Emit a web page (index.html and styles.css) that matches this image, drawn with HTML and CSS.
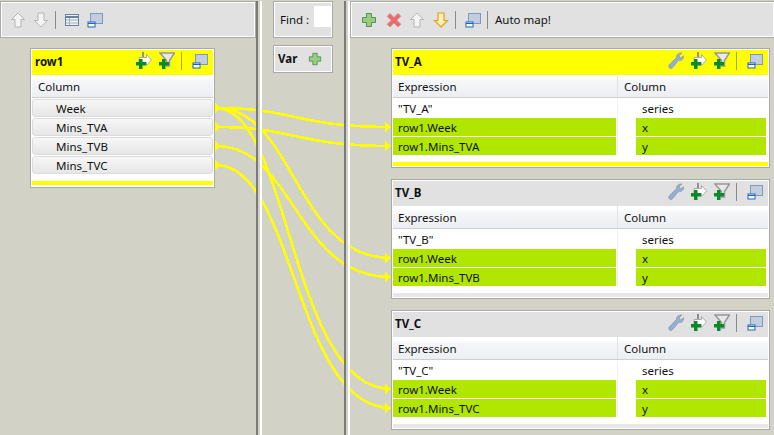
FILE: index.html
```html
<!DOCTYPE html>
<html lang="en">
<head>
<meta charset="utf-8">
<title>Map editor</title>
<link rel="stylesheet" href="styles.css">
</head>
<body>
<svg class="defs" width="0" height="0" aria-hidden="true">
  <symbol id="up" viewBox="0 0 16 16"><path d="M8 1 14.500 7.500H11V15H5V7.500H1.500Z" fill="#f4f4f4" stroke="currentColor"/></symbol>
  <symbol id="down" viewBox="0 0 16 16"><path d="M8 15 14.500 8.500H11V1H5V8.500H1.500Z" fill="#f4f4f4" stroke="#b5b5b5"/></symbol>
  <symbol id="down-o" viewBox="0 0 16 16"><path d="M8 15 14.500 8.500H11V1H5V8.500H1.500Z" fill="#fff0b8" stroke="#e0a020" stroke-width="1.200"/></symbol>
  <symbol id="table" viewBox="0 0 16 16"><rect x="1.500" y="2.500" width="13" height="11" fill="#eef2f8" stroke="#6d7f9a"/><path d="M1.500 5H14.500" stroke="#6d7f9a" stroke-width="2"/><path d="M2 8H14M2 11H14M5.500 6V13" stroke="#9db0c8"/></symbol>
  <symbol id="win" viewBox="0 0 16 16"><rect x="3.500" y="1.500" width="12" height="10" fill="#c2cedd" stroke="#7c9ac0"/><rect x="1" y="10" width="7" height="5" fill="#fff" stroke="#1a64c8"/><path d="M1 11.500H8" stroke="#1a64c8"/></symbol>
  <symbol id="plus" viewBox="0 0 16 16"><path d="M5.500 1.500H10.500V5.500H14.500V10.500H10.500V14.500H5.500V10.500H1.500V5.500H5.500Z" fill="#9ccc78" stroke="#4f9060"/></symbol>
  <symbol id="del" viewBox="0 0 16 16"><path d="M4 1.500 8 5.500 12 1.500 14.800 4.300 10.800 8.300 14.800 12.300 12 15 8 11 4 15 1.200 12.300 5.200 8.300 1.200 4.300Z" fill="#ec6a6a" stroke="#d89090"/></symbol>
  <symbol id="addmap" viewBox="0 0 16 18"><path d="M7 0V6" stroke="#8f8f8f" stroke-width="2"/><path d="M3 5.500H10.500V2.500L15.500 8 10.500 13.500V10.500H3Z" fill="#fff" stroke="#aaa"/><path d="M3 7H6.500V10H10V13.500H6.500V17H3V13.500H0V10H3Z" fill="#0a8a2a"/></symbol>
  <symbol id="funnel" viewBox="0 0 16 18"><path d="M1 1H15.500L10.500 8.500V14H7.500V8.500Z" fill="#e8e8e8" stroke="#969696" stroke-width="1.400"/><path d="M3 7H6.500V10H10V13.500H6.500V17H3V13.500H0V10H3Z" fill="#0a8a2a"/></symbol>
  <symbol id="wrench" viewBox="0 0 16 18"><path d="M1.500 16C.3 15 .5 13.500 1.500 12.500L8.500 5.500C8 3 10.500 .5 14 1L11 3.800 12.500 6 15.500 3.800C16 6.800 13.500 9.200 10.500 8.500L4.500 15.800C3.500 16.800 2.500 17 1.500 16Z" fill="#8eaedb" stroke="#9a9a9a" stroke-width=".8"/></symbol>
</svg>

<main class="app">
  <section class="col col-left">
    <div class="toolbar">
      <svg class="ico first muted"><use href="#up"/></svg>
      <svg class="ico m7"><use href="#down"/></svg>
      <span class="sep m6"></span>
      <svg class="ico m8"><use href="#table"/></svg>
      <svg class="ico m7"><use href="#win"/></svg>
    </div>
    <div class="card card-row">
      <div class="head yellow">
        <strong class="title">row1</strong>
        <svg class="ico tall"><use href="#addmap"/></svg>
        <svg class="ico tall m7"><use href="#funnel"/></svg>
        <span class="sep dark m6"></span>
        <svg class="ico m10"><use href="#win"/></svg>
      </div>
      <div class="colhead">Column</div>
      <div class="rows">
        <div class="btn">Week</div>
        <div class="btn">Mins_TVA</div>
        <div class="btn">Mins_TVB</div>
        <div class="btn">Mins_TVC</div>
      </div>
      <div class="bar yellow"></div>
    </div>
  </section>

  <div class="sash"></div>

  <section class="col col-mid">
    <div class="findbox"><span>Find :</span><span class="input"></span></div>
    <div class="varbox"><strong>Var</strong><svg class="ico small"><use href="#plus"/></svg></div>
  </section>

  <div class="sash"></div>

  <section class="col col-right">
    <div class="toolbar toolbar-right">
      <svg class="ico first"><use href="#plus"/></svg>
      <svg class="ico m9"><use href="#del"/></svg>
      <svg class="ico m7 muted"><use href="#up"/></svg>
      <svg class="ico m8"><use href="#down-o"/></svg>
      <span class="sep m6"></span>
      <svg class="ico m9"><use href="#win"/></svg>
      <span class="sep m6"></span>
      <span class="auto">Auto map!</span>
    </div>
    <div class="stack">
      <div class="card out">
        <div class="head yellow">
          <strong class="title">TV_A</strong>
          <svg class="ico tall"><use href="#wrench"/></svg>
          <svg class="ico tall m7"><use href="#addmap"/></svg>
          <svg class="ico tall m7"><use href="#funnel"/></svg>
          <span class="sep dark m6"></span>
          <svg class="ico m10"><use href="#win"/></svg>
        </div>
        <div class="thead"><div>Expression</div><div>Column</div></div>
        <div class="trow"><div class="expr">"TV_A"</div><div class="name">series</div></div>
        <div class="trow on"><div class="expr">row1.Week</div><div class="name">x</div></div>
        <div class="trow on"><div class="expr">row1.Mins_TVA</div><div class="name">y</div></div>
        <div class="bar yellow"></div>
      </div>
      <div class="card out">
        <div class="head grey">
          <strong class="title">TV_B</strong>
          <svg class="ico tall"><use href="#wrench"/></svg>
          <svg class="ico tall m7"><use href="#addmap"/></svg>
          <svg class="ico tall m7"><use href="#funnel"/></svg>
          <span class="sep m6"></span>
          <svg class="ico m10"><use href="#win"/></svg>
        </div>
        <div class="thead"><div>Expression</div><div>Column</div></div>
        <div class="trow"><div class="expr">"TV_B"</div><div class="name">series</div></div>
        <div class="trow on"><div class="expr">row1.Week</div><div class="name">x</div></div>
        <div class="trow on"><div class="expr">row1.Mins_TVB</div><div class="name">y</div></div>
        <div class="bar pale"></div>
      </div>
      <div class="card out">
        <div class="head grey">
          <strong class="title">TV_C</strong>
          <svg class="ico tall"><use href="#wrench"/></svg>
          <svg class="ico tall m7"><use href="#addmap"/></svg>
          <svg class="ico tall m7"><use href="#funnel"/></svg>
          <span class="sep m6"></span>
          <svg class="ico m10"><use href="#win"/></svg>
        </div>
        <div class="thead"><div>Expression</div><div>Column</div></div>
        <div class="trow"><div class="expr">"TV_C"</div><div class="name">series</div></div>
        <div class="trow on"><div class="expr">row1.Week</div><div class="name">x</div></div>
        <div class="trow on"><div class="expr">row1.Mins_TVC</div><div class="name">y</div></div>
        <div class="bar pale"></div>
      </div>
    </div>
  </section>

  <svg class="links" viewBox="0 0 774 435" aria-hidden="true">
    <g class="link">
      <path d="M216 108C295 108 295 127 391 127"/>
      <path d="M216 127C295 127 295 146 391 146"/>
      <path d="M216 108C295 108 295 258 391 258"/>
      <path d="M216 146C295 146 295 277 391 277"/>
      <path d="M216 108C290 108 290 389 391 389"/>
      <path d="M216 165C295 165 295 408 391 408"/>
    </g>
    <g class="head-arrows">
      <path d="M215 103 220 108 215 113ZM215 122 220 127 215 132ZM215 141 220 146 215 151ZM215 160 220 165 215 170Z"/>
      <path d="M385 122 391 127 385 132ZM385 141 391 146 385 151ZM385 253 391 258 385 263ZM385 272 391 277 385 282ZM385 384 391 389 385 394ZM385 403 391 408 385 413Z"/>
    </g>
  </svg>
</main>
</body>
</html>
```
FILE: styles.css
```css
* { box-sizing: border-box; }
html, body { margin: 0; padding: 0; }
body {
  width: 774px;
  height: 435px;
  overflow: hidden;
  background: #d2d2c6;
  color: #101010;
  font: 11.5px/18px "Noto Sans", "Open Sans", sans-serif;
}
.defs { position: absolute; }
.app {
  position: relative;
  display: flex;
  width: 774px;
  height: 435px;
  padding-top: 1px;
}
.col { flex: none; position: relative; }
.col-left { width: 256px; }
.col-mid { width: 82px; padding: 0 11px 0 11px; }
.col-right { width: 424px; }
.sash {
  flex: none;
  width: 6px;
  position: relative;
  z-index: 3;
  background: #d2d2c6;
  border-left: 2px solid #7a7a7a;
  border-right: 2px solid #fff;
}
.toolbar {
  display: flex;
  align-items: center;
  height: 37px;
  padding-left: 9px;
  background: #e1e1e1;
  border: 1px solid #a9a9a9;
  box-shadow: inset 0 0 0 1px #fff;
}
.toolbar-right { padding-left: 10px; border-right: 0; }
.ico { flex: none; display: block; width: 16px; height: 16px; color: #b5b5b5; }
.ico.tall { width: 16px; height: 18px; }
.ico.small { width: 14px; height: 14px; margin-left: 11px; }
.m6 { margin-left: 6px; }
.m7 { margin-left: 7px; }
.m8 { margin-left: 8px; }
.m9 { margin-left: 9px; }
.m10 { margin-left: 10px; }
.sep { flex: none; width: 1px; height: 18px; background: #8a8a8a; }
.sep.dark { background: #a8a830; }
.auto { margin-left: 7px; }

.card {
  position: relative;
  z-index: 2;
  background: #fff;
  border: 1px solid #a9a9a9;
  padding: 1px;
}
.card-row { width: 185px; height: 140px; margin: 10px 0 0 30px; }
.out { width: 379px; height: 120px; }
.stack { display: flex; flex-direction: column; gap: 11px; margin: 10px 0 0 41px; }
.head { display: flex; align-items: center; height: 25px; padding: 0 5px 3px 3px; }
.out .head { padding-left: 2px; }
.title { margin-right: auto; margin-top: 2px; font-weight: 700; }
.yellow { background: #ffff00; }
.grey { background: #e1e1e1; }
.pale { background: #e8e8e8; }

.colhead {
  height: 23px;
  padding: 3px 0 0 6px;
  background: linear-gradient(#fff 0 4px, #f6f7f9 5px, #eceef1);
  border-bottom: 1px solid #cfcfcf;
}
.rows { display: flex; flex-direction: column; gap: 1px; margin-top: 1px; }
.btn {
  height: 18px;
  padding-left: 23px;
  line-height: 18px;
  border: 1px solid #dcdcdc;
  border-radius: 3px;
  background: linear-gradient(#f7f7f7, #e6e6e6);
}
.card-row .bar { margin-top: 7px; }
.bar { height: 4px; }

.thead {
  display: grid;
  grid-template-columns: 224px 151px;
  height: 23px;
  margin-bottom: 1px;
  background: linear-gradient(#fff 0 4px, #f6f7f9 5px, #eceef1);
  border-bottom: 1px solid #cfcfcf;
}
.thead div { padding: 3px 0 0 5px; }
.thead div + div { padding-left: 6px; border-left: 1px solid #e2e2e2; }
.trow {
  display: grid;
  grid-template-columns: 224px 151px;
  grid-template-rows: 18px;
  height: 18px;
  margin-bottom: 1px;
}
.expr { padding: 1px 0 0 5px; margin-right: 1px; overflow: hidden; }
.name { padding: 1px 0 0 6px; margin-left: 1px; margin-right: 2px; border-left: 18px solid #fff; box-shadow: -1px 0 0 #eef0f2; overflow: hidden; }
.on .expr { background: #b0e600; }
.on .name { background: #b0e600; }
.out .bar { margin-top: 7px; }

.findbox {
  display: flex;
  align-items: center;
  justify-content: space-between;
  width: 60px;
  height: 37px;
  padding: 0 0 0 6px;
  background: #e1e1e1;
  border: 1px solid #a9a9a9;
  box-shadow: inset 0 0 0 1px #fff;
}
.input { width: 18px; height: 21px; background: #fff; margin-top: -6px; }
.varbox {
  display: flex;
  align-items: center;
  width: 60px;
  height: 28px;
  margin-top: 7px;
  padding-left: 4px;
  background: #e1e1e1;
  border: 1px solid #a9a9a9;
  box-shadow: inset 0 0 0 1px #fff;
}
.links {
  position: absolute;
  left: 0;
  top: 0;
  z-index: 1;
  width: 774px;
  height: 435px;
  pointer-events: none;
  shape-rendering: crispEdges;
}
.link path { fill: none; stroke: #ffff00; stroke-width: 2.6; }
.head-arrows path { fill: #ffff00; }
```
